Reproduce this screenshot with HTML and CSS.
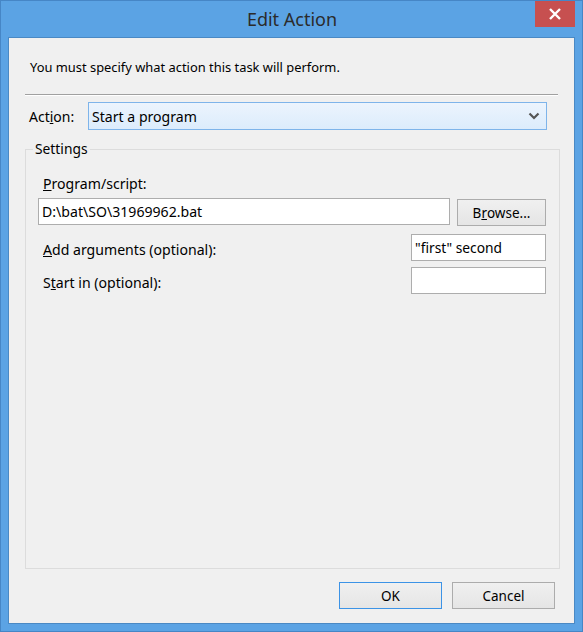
FILE: index.html
```html
<!DOCTYPE html>
<html>
<head>
<meta charset="utf-8">
<link rel="stylesheet" href="styles.css">
</head>
<body>
<div class="window">
  <div class="titlebar">
    <div class="title">Edit Action</div>
    <div class="close">
      <svg width="14" height="12" viewBox="0 0 14 12"><path d="M2 1 L12 11 M12 1 L2 11" stroke="#fff" stroke-width="2.4" fill="none"/></svg>
    </div>
  </div>
  <div class="client">
    <div class="intro">You must specify what action this task will perform.</div>
    <div class="sep"></div>
    <div class="action-row">
      <span class="action-label">Act<u>i</u>on:</span>
      <div class="combo">
        <span>Start a program</span>
        <svg class="chev" width="12" height="8" viewBox="0 0 12 8"><path d="M1.5 1.5 L6 6 L10.5 1.5" stroke="#555" stroke-width="2.2" fill="none"/></svg>
      </div>
    </div>
    <div class="group">
      <span class="legend">Settings</span>
      <div class="lbl prog-lbl"><u>P</u>rogram/script:</div>
      <div class="prog-row">
        <div class="input wide">D:\bat\SO\31969962.bat</div>
        <div class="btn browse">B<u>r</u>owse...</div>
      </div>
      <div class="field-row args-row">
        <div class="lbl row-lbl"><u>A</u>dd arguments (optional):</div>
        <div class="input small">"first" second</div>
      </div>
      <div class="field-row start-row">
        <div class="lbl row-lbl">S<u>t</u>art in (optional):</div>
        <div class="input small"></div>
      </div>
    </div>
    <div class="buttons">
      <div class="btn ok">OK</div>
      <div class="btn cancel">Cancel</div>
    </div>
  </div>
</div>
</body>
</html>
```
FILE: styles.css
```css
html, body {
  margin: 0;
  padding: 0;
}
body {
  width: 583px;
  height: 632px;
  font-family: "Noto Sans", "Open Sans", sans-serif;
  font-size: 14px;
  color: #000;
}
.window {
  box-sizing: border-box;
  width: 583px;
  height: 632px;
  background: #5ba3e4;
  border: 1px solid #4686c6;
  padding: 0 7px 7px 7px;
  display: flex;
  flex-direction: column;
}
.titlebar {
  height: 36px;
  flex: none;
  position: relative;
  display: flex;
  justify-content: center;
}
.title {
  font-size: 18px;
  line-height: 20px;
  margin-top: 8px;
  color: #2b2b2b;
  margin-left: 1px;
}
.close {
  position: absolute;
  right: 0;
  top: 0;
  width: 40px;
  height: 26px;
  background: #c75050;
  display: flex;
  align-items: center;
  justify-content: center;
}
.client {
  flex: 1;
  background: #f0f0f0;
  border: 1px solid #4a89c4;
  display: flex;
  flex-direction: column;
  padding: 0 14px 0 16px;
}
.intro {
  margin-top: 21px;
  line-height: 16px;
  padding-left: 5px;
  font-size: 12.9px;
}
.sep {
  margin-top: 19px;
  height: 1px;
  background: #a0a0a0;
  border-bottom: 1px solid #ffffff;
  margin-right: 2px;
}
.action-row {
  display: flex;
  align-items: center;
  margin-top: 6px;
}
.action-label {
  width: 63px;
  padding-left: 4px;
  box-sizing: border-box;
  line-height: 16px;
  margin-top: 2px;
  font-size: 14px;
}
.combo {
  box-sizing: border-box;
  width: 459px;
  height: 28px;
  border: 1px solid #7eb4ea;
  background: linear-gradient(#ecf4fd, #dcecfc);
  display: flex;
  align-items: center;
  justify-content: space-between;
  padding: 0 6px 0 3px;
  font-size: 14.1px;
}
.group {
  position: relative;
  margin-top: 19px;
  height: 420px;
  box-sizing: border-box;
  border: 1px solid #dcdcdc;
  padding: 26px 13px 0 12px;
}
.legend {
  position: absolute;
  top: -9px;
  left: 7px;
  padding: 0 2px;
  background: #f0f0f0;
  font-size: 13.8px;
  line-height: 16px;
}
.lbl {
  line-height: 16px;
  padding-left: 5px;
  font-size: 14.1px;
}
.row-lbl {
  padding-top: 5px;
}
.prog-row {
  display: flex;
  gap: 7px;
  margin-top: 6px;
}
.input {
  box-sizing: border-box;
  height: 27px;
  background: #fff;
  border: 1px solid #adadad;
  padding: 0 3px;
  line-height: 25px;
  font-size: 14.1px;
  white-space: nowrap;
}
.input.wide {
  flex: 1;
}
.input.small {
  width: 135px;
  font-size: 13.8px;
}
.btn {
  box-sizing: border-box;
  border: 1px solid #acacac;
  background: linear-gradient(#f0f0f0, #e5e5e5);
  display: flex;
  align-items: center;
  justify-content: center;
  font-size: 13.5px;
}
.browse {
  width: 89px;
  height: 27px;
  margin-top: 1px;
}
.field-row {
  display: flex;
  align-items: center;
  justify-content: space-between;
}
.args-row {
  margin-top: 8px;
}
.start-row {
  margin-top: 6px;
}
.buttons {
  display: flex;
  justify-content: flex-end;
  gap: 10px;
  margin-top: 13px;
  padding-right: 5px;
}
.ok, .cancel {
  width: 103px;
  height: 27px;
}
.ok {
  border-color: #3c93e6;
}
```
